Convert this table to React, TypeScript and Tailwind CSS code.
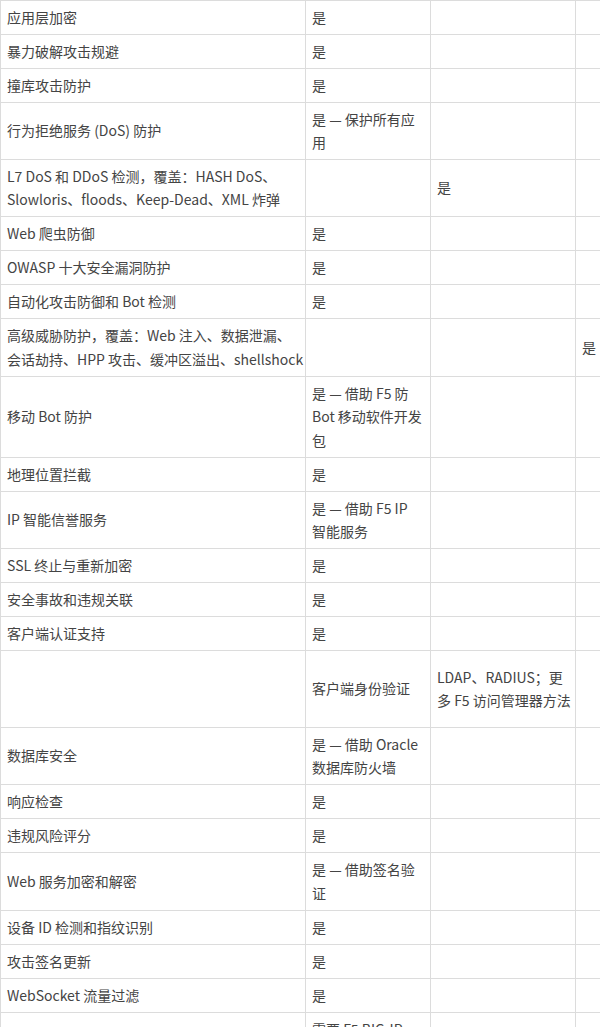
type Row = {
  h: number;
  cells: React.ReactNode[];
};

const rows: Row[] = [
  { h: 34, cells: ['应用层加密', '是', '', ''] },
  { h: 34, cells: ['暴力破解攻击规避', '是', '', ''] },
  { h: 34, cells: ['撞库攻击防护', '是', '', ''] },
  { h: 57, cells: ['行为拒绝服务 (DoS) 防护', <>是 — 保护所有应<br />用</>, '', ''] },
  {
    h: 57,
    cells: [<>L7 DoS 和 DDoS 检测，覆盖：HASH DoS、<br />Slowloris、floods、Keep-Dead、XML 炸弹</>, '', '是', ''],
  },
  { h: 34, cells: ['Web 爬虫防御', '是', '', ''] },
  { h: 34, cells: ['OWASP 十大安全漏洞防护', '是', '', ''] },
  { h: 34, cells: ['自动化攻击防御和 Bot 检测', '是', '', ''] },
  {
    h: 58,
    cells: [<>高级威胁防护，覆盖：Web 注入、数据泄漏、<br />会话劫持、HPP 攻击、缓冲区溢出、shellshock</>, '', '', '是'],
  },
  { h: 81, cells: ['移动 Bot 防护', <>是 — 借助 F5 防<br />Bot 移动软件开发<br />包</>, '', ''] },
  { h: 34, cells: ['地理位置拦截', '是', '', ''] },
  { h: 57, cells: ['IP 智能信誉服务', <>是 — 借助 F5 IP<br />智能服务</>, '', ''] },
  { h: 34, cells: ['SSL 终止与重新加密', '是', '', ''] },
  { h: 34, cells: ['安全事故和违规关联', '是', '', ''] },
  { h: 34, cells: ['客户端认证支持', '是', '', ''] },
  { h: 77, cells: ['', '客户端身份验证', <>LDAP、RADIUS；更<br />多 F5 访问管理器方法</>, ''] },
  { h: 57, cells: ['数据库安全', <>是 — 借助 Oracle<br />数据库防火墙</>, '', ''] },
  { h: 34, cells: ['响应检查', '是', '', ''] },
  { h: 34, cells: ['违规风险评分', '是', '', ''] },
  { h: 58, cells: ['Web 服务加密和解密', <>是 — 借助签名验<br />证</>, '', ''] },
  { h: 34, cells: ['设备 ID 检测和指纹识别', '是', '', ''] },
  { h: 34, cells: ['攻击签名更新', '是', '', ''] },
  { h: 34, cells: ['WebSocket 流量过滤', '是', '', ''] },
  { h: 81, cells: ['', <>需要 F5 BIG-IP<br />Access Policy<br />Manager</>, '', ''] },
];

const colWidths = ['w-[305px]', 'w-[125px]', 'w-[145px]', 'w-[125px]'];

export default function App() {
  return (
    <div className="w-[600px] h-[1027px] overflow-hidden bg-white">
      <table
        className="w-[700px] table-fixed border-collapse text-[14px] leading-[23.5px] text-[#444]"
        style={{ fontFamily: '"Noto Sans CJK SC", "Noto Sans", sans-serif' }}
      >
        <colgroup>
          {colWidths.map((w, i) => (
            <col key={i} className={w} />
          ))}
        </colgroup>
        <tbody>
          {rows.map((row, i) => (
            <tr key={i} style={{ height: row.h }}>
              {row.cells.map((c, j) => (
                <td
                  key={j}
                  className="border border-[#dcdcdc] px-[6px] py-[4px] align-middle whitespace-nowrap"
                >
                  {c}
                </td>
              ))}
            </tr>
          ))}
        </tbody>
      </table>
    </div>
  );
}
